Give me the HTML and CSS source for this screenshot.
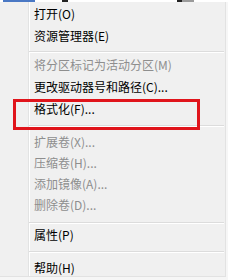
FILE: index.html
```html
<!DOCTYPE html>
<html lang="zh">
<head>
    <meta charset="UTF-8">
    <title>磁盘右键菜单</title>
    <link rel="stylesheet" href="styles.css">
</head>
<body>
    <div class="behind">
        <span class="gap" style="width:3px"></span>
        <span class="link" style="width:32px"></span>
        <span class="gap" style="width:27px"></span>
        <span class="ink" style="width:6px"></span>
        <span class="gap" style="width:109px"></span>
        <span class="ink" style="width:5px"></span>
        <span class="ink-light" style="width:12px"></span>
    </div>

    <div class="menu">
        <div class="item">打开(O)</div>
        <div class="item">资源管理器(E)</div>
        <div class="sep"></div>
        <div class="item disabled">将分区标记为活动分区(M)</div>
        <div class="item">更改驱动器号和路径(C)...</div>
        <div class="item">格式化(F)...</div>
        <div class="sep wide"></div>
        <div class="item short disabled">扩展卷(X)...</div>
        <div class="item short disabled">压缩卷(H)...</div>
        <div class="item short disabled">添加镜像(A)...</div>
        <div class="item short disabled">删除卷(D)...</div>
        <div class="sep low"></div>
        <div class="item">属性(P)</div>
        <div class="sep wide"></div>
        <div class="item last">帮助(H)</div>

        <!-- 标注框 -->
        <div class="mark"></div>
    </div>
</body>
</html>
```

FILE: styles.css
```css
body {
    margin: 0;
    width: 228px;
    height: 280px;
    overflow: hidden;
    background-color: #f6f6f6;
    font-family: "Noto Sans CJK SC", "Microsoft YaHei", sans-serif;
    font-size: 12px;
    color: #000;
}
.behind {
    display: flex;
    height: 2px;
    background-color: #fff;
}
.behind .link {
    background-color: #4a78c4;
}
.behind .ink {
    background-color: #222;
}
.behind .ink-light {
    background-color: #9a9a9a;
}
.menu {
    position: relative;
    width: 225px;
    padding-top: 1px;
    background:
        linear-gradient(to right, transparent 28px, #e2e3e3 28px, #e2e3e3 29px, #fff 29px, #fff 30px, transparent 30px),
        #f0f0f0;
    border-right: 1px solid #e2e2e2;
    border-bottom: 1px solid #e2e2e2;
}
.item {
    height: 22px;
    line-height: 22px;
    padding-left: 34px;
    white-space: nowrap;
}
.item.short {
    height: 21px;
    line-height: 21px;
}
.item.last {
    height: 19px;
}
.item.disabled {
    color: #8e8e8e;
}
.sep {
    box-sizing: border-box;
    height: 7px;
    padding-top: 4px;
}
.sep.wide {
    height: 11px;
    padding-top: 5px;
}
.sep.low {
    height: 9px;
    padding-top: 7px;
}
.sep::after {
    content: "";
    display: block;
    margin: 0 1px 0 29px;
    border-top: 1px solid #dcdcdc;
    border-bottom: 1px solid #fff;
}
.mark {
    position: absolute;
    left: 13px;
    top: 97px;
    width: 181px;
    height: 25px;
    border: 3px solid #e0141b;
}
```
